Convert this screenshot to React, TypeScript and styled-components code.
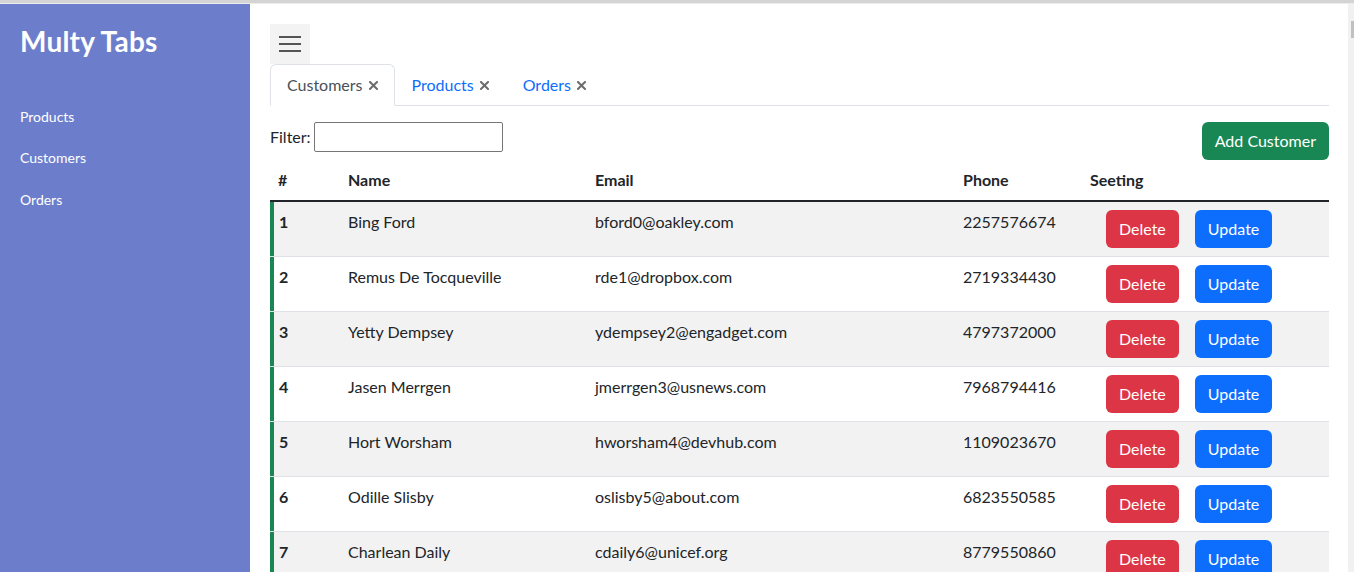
import React from "react";
import styled, { createGlobalStyle } from "styled-components";

const GlobalStyle = createGlobalStyle`
  html, body {
    margin: 0;
    padding: 0;
    overflow: hidden;
    background: #fff;
  }
  body {
    font-family: "Segoe UI", Lato, "Liberation Sans", sans-serif;
    color: #212529;
    font-size: 16px;
    line-height: 1.5;
  }
  * { box-sizing: border-box; }
`;

const Page = styled.div`
  display: flex;
  flex-direction: column;
  height: 572px;
`;

const TopEdge = styled.div`
  height: 4px;
  flex: none;
  background: linear-gradient(#d4d4d4 0 3px, #ececec 3px 4px);
`;

const Shell = styled.div`
  flex: 1;
  display: flex;
  min-height: 0;
`;

const Sidebar = styled.aside`
  width: 250px;
  flex: none;
  background: #6c7ecb;
  color: #fff;
  padding: 21px 20px 0;
`;

const Title = styled.h3`
  margin: 0 0 37px;
  font-size: 28px;
  font-weight: 700;
  line-height: 1.2;
  letter-spacing: 0.2px;
`;

const SideNav = styled.nav`
  display: flex;
  flex-direction: column;
`;

const SideLink = styled.a`
  display: block;
  color: #fff;
  text-decoration: none;
  font-size: 14px;
  line-height: 21.5px;
  padding: 10px 0;
`;

const Main = styled.main`
  flex: 1;
  min-width: 0;
  padding: 20px 19px 0 20px;
  overflow: hidden;
`;

const ScrollTrack = styled.div`
  width: 6px;
  flex: none;
  background: #f1f1f1;
  padding-top: 17px;
  display: flex;
  justify-content: flex-end;
  align-items: flex-start;
`;

const ScrollThumb = styled.div`
  width: 3px;
  height: 17px;
  background: #c1c1c1;
`;

const MenuButton = styled.button`
  width: 40px;
  height: 40px;
  border: none;
  padding: 0;
  background: #f3f3f3;
  display: flex;
  flex-direction: column;
  align-items: center;
  justify-content: center;
  gap: 5px;
  cursor: pointer;
`;

const MenuBar = styled.span`
  display: block;
  width: 22px;
  height: 2px;
  background: #555;
`;

const Tabs = styled.div`
  display: flex;
  border-bottom: 1px solid #dee2e6;
`;

const Tab = styled.div<{ $active?: boolean }>`
  display: flex;
  align-items: center;
  gap: 6px;
  padding: 8px 16px;
  margin-bottom: -1px;
  line-height: 24px;
  border: 1px solid transparent;
  border-radius: 6px 6px 0 0;
  color: ${(p) => (p.$active ? "#495057" : "#0d6efd")};
  background: ${(p) => (p.$active ? "#fff" : "transparent")};
  border-color: ${(p) => (p.$active ? "#dee2e6 #dee2e6 #fff" : "transparent")};
  cursor: pointer;
`;

const CloseIcon = styled.svg`
  width: 9px;
  height: 9px;
  flex: none;
  margin-top: 1px;
`;

const Toolbar = styled.div`
  margin-top: 16px;
  display: flex;
  justify-content: space-between;
  align-items: flex-start;
`;

const FilterGroup = styled.label`
  display: flex;
  align-items: center;
  gap: 3px;
  height: 30px;
`;

const FilterInput = styled.input`
  width: 189px;
  height: 30px;
  border: 1px solid #767676;
  border-radius: 2px;
  font: inherit;
  padding: 1px 2px;
`;

const Btn = styled.button<{ $variant: "success" | "danger" | "primary" }>`
  font: inherit;
  line-height: 24px;
  padding: 6px 12px;
  border-radius: 6px;
  border: 1px solid transparent;
  color: #fff;
  cursor: pointer;
  background: ${(p) =>
    p.$variant === "success" ? "#198754" : p.$variant === "danger" ? "#dc3545" : "#0d6efd"};
`;

const ActionBtn = styled(Btn)`
  margin-left: 16px;
`;

const Table = styled.table`
  width: 100%;
  border-collapse: collapse;
  table-layout: fixed;
`;

const Th = styled.th<{ $w: number }>`
  width: ${(p) => p.$w}px;
  text-align: left;
  font-weight: 700;
  padding: 8px;
  line-height: 24px;
  border-bottom: 2px solid #212529;
`;

const Row = styled.tr<{ $striped: boolean }>`
  background: ${(p) => (p.$striped ? "#f2f2f2" : "#fff")};
  border-bottom: 1px solid #dee2e6;
`;

const Td = styled.td`
  padding: 8px;
  vertical-align: top;
  line-height: 24px;
  white-space: nowrap;
`;

const IdCell = styled(Td)`
  font-weight: 700;
  padding-left: 9px;
  box-shadow: inset 4px 0 0 #198754;
`;

const ActionWrap = styled.div`
  display: flex;
`;

const customers = [
  { id: 1, name: "Bing Ford", email: "bford0@oakley.com", phone: "2257576674" },
  { id: 2, name: "Remus De Tocqueville", email: "rde1@dropbox.com", phone: "2719334430" },
  { id: 3, name: "Yetty Dempsey", email: "ydempsey2@engadget.com", phone: "4797372000" },
  { id: 4, name: "Jasen Merrgen", email: "jmerrgen3@usnews.com", phone: "7968794416" },
  { id: 5, name: "Hort Worsham", email: "hworsham4@devhub.com", phone: "1109023670" },
  { id: 6, name: "Odille Slisby", email: "oslisby5@about.com", phone: "6823550585" },
  { id: 7, name: "Charlean Daily", email: "cdaily6@unicef.org", phone: "8779550860" },
];

const Close = () => (
  <CloseIcon viewBox="0 0 9 9">
    <path d="M1 1 L8 8 M8 1 L1 8" stroke="#6c6c6c" strokeWidth="2" strokeLinecap="square" fill="none" />
  </CloseIcon>
);

export default function App() {
  return (
    <>
      <GlobalStyle />
      <Page>
        <TopEdge />
        <Shell>
          <Sidebar>
            <Title>Multy Tabs</Title>
            <SideNav>
              <SideLink href="#">Products</SideLink>
              <SideLink href="#">Customers</SideLink>
              <SideLink href="#">Orders</SideLink>
            </SideNav>
          </Sidebar>
          <Main>
            <MenuButton aria-label="menu">
              <MenuBar />
              <MenuBar />
              <MenuBar />
            </MenuButton>
            <Tabs>
              <Tab $active>
                Customers <Close />
              </Tab>
              <Tab>
                Products <Close />
              </Tab>
              <Tab>
                Orders <Close />
              </Tab>
            </Tabs>
            <Toolbar>
              <FilterGroup>
                Filter:
                <FilterInput type="text" />
              </FilterGroup>
              <Btn $variant="success">Add Customer</Btn>
            </Toolbar>
            <Table>
              <thead>
                <tr>
                  <Th $w={70}>#</Th>
                  <Th $w={247}>Name</Th>
                  <Th $w={368}>Email</Th>
                  <Th $w={127}>Phone</Th>
                  <Th $w={247}>Seeting</Th>
                </tr>
              </thead>
              <tbody>
                {customers.map((c, i) => (
                  <Row key={c.id} $striped={i % 2 === 0}>
                    <IdCell>{c.id}</IdCell>
                    <Td>{c.name}</Td>
                    <Td>{c.email}</Td>
                    <Td>{c.phone}</Td>
                    <Td>
                      <ActionWrap>
                        <ActionBtn $variant="danger">Delete</ActionBtn>
                        <ActionBtn $variant="primary">Update</ActionBtn>
                      </ActionWrap>
                    </Td>
                  </Row>
                ))}
              </tbody>
            </Table>
          </Main>
          <ScrollTrack>
            <ScrollThumb />
          </ScrollTrack>
        </Shell>
      </Page>
    </>
  );
}
